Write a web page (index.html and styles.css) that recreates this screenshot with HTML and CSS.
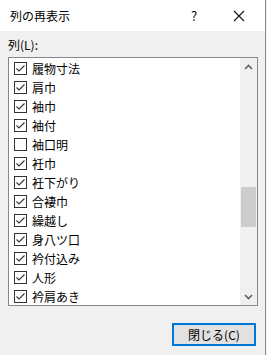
FILE: index.html
```html
<!DOCTYPE html>
<html>
<head>
    <title>列の再表示</title>
    <link rel="stylesheet" href="styles.css">
</head>
<body>
    <div class="window">
        <div class="titlebar">
            <span class="title">列の再表示</span>
            <span class="help">?</span>
            <span class="close">
                <svg width="12" height="12" viewBox="0 0 12 12"><path d="M1 1 L11 11 M11 1 L1 11" stroke="#111" stroke-width="1.1" fill="none"/></svg>
            </span>
        </div>

        <div class="content">
            <div class="label">列(L):</div>
            <div class="listbox">
                <ul class="items">
                    <li><span class="cb on"></span>履物寸法</li>
                    <li><span class="cb on"></span>肩巾</li>
                    <li><span class="cb on"></span>袖巾</li>
                    <li><span class="cb on"></span>袖付</li>
                    <li><span class="cb"></span>袖口明</li>
                    <li><span class="cb on"></span>衽巾</li>
                    <li><span class="cb on"></span>衽下がり</li>
                    <li><span class="cb on"></span>合褄巾</li>
                    <li><span class="cb on"></span>繰越し</li>
                    <li><span class="cb on"></span>身八ツ口</li>
                    <li><span class="cb on"></span>衿付込み</li>
                    <li><span class="cb on"></span>人形</li>
                    <li><span class="cb on"></span>衿肩あき</li>
                </ul>
                <div class="scrollbar">
                    <div class="arrow">
                        <svg width="9" height="6" viewBox="0 0 9 6"><path d="M1 5 L4.5 1.5 L8 5" stroke="#606060" stroke-width="1.6" fill="none"/></svg>
                    </div>
                    <div class="thumb"></div>
                    <div class="spacer"></div>
                    <div class="arrow">
                        <svg width="9" height="6" viewBox="0 0 9 6"><path d="M1 1 L4.5 4.5 L8 1" stroke="#606060" stroke-width="1.6" fill="none"/></svg>
                    </div>
                </div>
            </div>
            <div class="footer">
                <button class="btn">閉じる(C)</button>
            </div>
        </div>
    </div>
</body>
</html>
```

FILE: styles.css
```css
body { margin: 0; background: #f0f0f0; font-family: "Noto Sans CJK JP", "Noto Sans", sans-serif; font-size: 12px; color: #000; }
.window { width: 265px; height: 355px; border-right: 1px solid #8a8a8a; box-sizing: content-box; background: #f0f0f0; }
.titlebar { height: 31px; background: #fff; display: flex; align-items: center; }
.title { padding-left: 10px; flex: 1; font-size: 12px; color: #000; }
.help { width: 14px; margin-right: 32px; text-align: center; font-size: 13px; }
.close { width: 12px; margin-right: 20px; display: flex; }
.content { padding: 0 8px; }
.label { height: 26px; line-height: 16px; padding-top: 6px; box-sizing: border-box; font-size: 12px; }
.listbox { width: 250px; height: 249px; box-sizing: border-box; border: 1px solid #828790; background: #fff; display: flex; }
.items { list-style: none; margin: 0; padding: 1px 0 0 5px; flex: 1; }
.items li { height: 19px; display: flex; align-items: center; white-space: nowrap; }
.cb { width: 13px; height: 13px; box-sizing: border-box; border: 1px solid #333; margin-right: 5px; display: inline-block; }
.cb.on { background: url("data:image/svg+xml;utf8,<svg xmlns='http://www.w3.org/2000/svg' width='11' height='11' viewBox='0 0 11 11'><path d='M1.5 5.5 L4 8 L9.5 2.5' stroke='%23333' stroke-width='1.1' fill='none'/></svg>") no-repeat center; }
.scrollbar { width: 17px; background: #f0f0f0; display: flex; flex-direction: column; }
.arrow { height: 17px; display: flex; align-items: center; justify-content: center; }
.thumb { height: 40px; margin-top: 112px; margin-left: 1px; margin-right: 1px; background: #cdcdcd; }
.spacer { flex: 1; }
.footer { display: flex; justify-content: flex-end; padding-top: 17px; padding-right: 1px; }
.btn { width: 84px; height: 23px; border: 2px solid #0078d7; background: #e1e1e1; font-family: inherit; font-size: 12px; padding: 0; color: #000; }
```
